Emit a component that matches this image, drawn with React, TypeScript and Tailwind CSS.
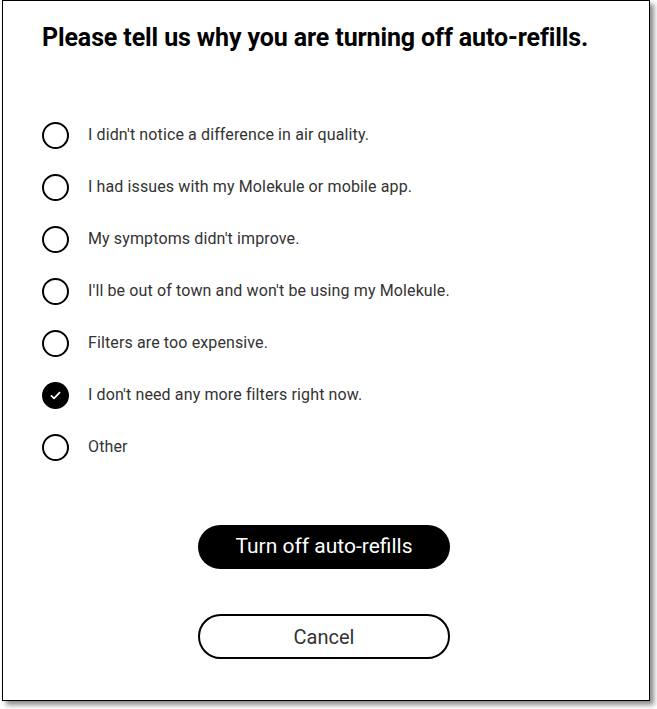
import React from 'react';

const reasons = [
  "I didn't notice a difference in air quality.",
  'I had issues with my Molekule or mobile app.',
  "My symptoms didn't improve.",
  "I'll be out of town and won't be using my Molekule.",
  'Filters are too expensive.',
  "I don't need any more filters right now.",
  'Other',
];

const Radio = ({ checked }: { checked: boolean }) =>
  checked ? (
    <span className="flex h-[27px] w-[27px] items-center justify-center rounded-full bg-black">
      <svg width="13" height="13" viewBox="0 0 16 16" fill="none">
        <path d="M3 8.5l3.2 3L13 4.5" stroke="white" strokeWidth="2.2" strokeLinecap="round" strokeLinejoin="round" />
      </svg>
    </span>
  ) : (
    <span className="block h-[27px] w-[27px] rounded-full border-2 border-black" />
  );

export default function App() {
  const selected = 5;

  return (
    <div className="h-[709px] w-[657px] bg-white font-['Roboto',sans-serif]">
      <div className="ml-[2px] flex h-[701px] w-[648px] flex-col border border-black bg-white pl-[39px] pt-[22px] shadow-[4px_4px_5px_rgba(0,0,0,0.45)]">
        <h1 className="text-[25px] font-bold leading-[30px] tracking-[-0.12px] text-black">
          Please tell us why you are turning off auto-refills.
        </h1>

        <ul className="mt-[56px] flex flex-col">
          {reasons.map((r, i) => (
            <li key={r} className="flex h-[52px] items-center gap-[19px]">
              <Radio checked={i === selected} />
              <span className="text-[16px] tracking-[0.12px] text-[#333]">{r}</span>
            </li>
          ))}
        </ul>

        <div className="mt-[52px] flex flex-col items-center gap-[45px] pr-[43px]">
          <button className="h-[44px] w-[252px] rounded-full bg-black text-[21px] text-white">
            Turn off auto-refills
          </button>
          <button className="h-[45px] w-[252px] rounded-full border-2 border-black bg-white text-[20px] text-[#333]">
            Cancel
          </button>
        </div>
      </div>
    </div>
  );
}
